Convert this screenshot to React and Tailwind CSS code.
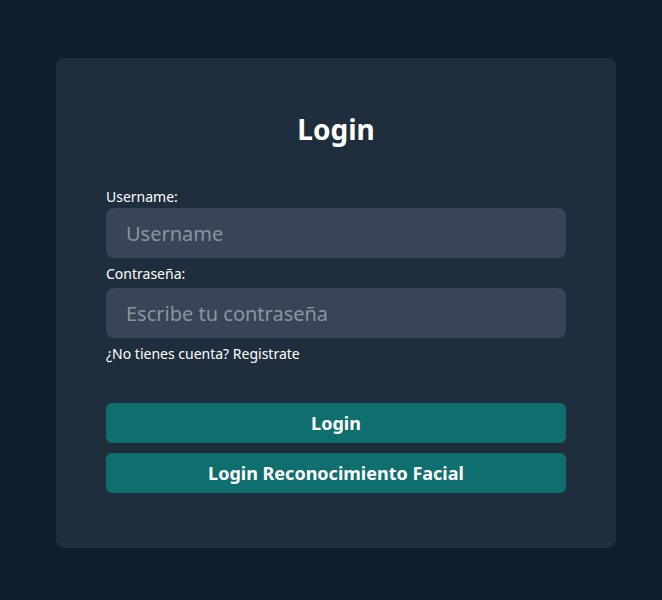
export default function App() {
  return (
    <div className="min-h-screen w-full bg-[#0f1f2d] pt-[58px] font-['Noto_Sans',sans-serif]">
      <div className="ml-[56px] w-[560px] rounded-lg bg-[#1f2e3d] px-[50px] pt-[51px] pb-[55px]">
        <h1 className="text-center text-[28px] font-bold leading-[40px] text-white">Login</h1>
        <form className="mt-[38px] flex flex-col" onSubmit={(e) => e.preventDefault()}>
          <label className="text-[14px] leading-[20px] text-white">Username:</label>
          <input
            type="text"
            placeholder="Username"
            className="mt-[1px] h-[50px] w-full rounded-lg bg-[#374556] px-5 text-[20px] text-white placeholder:text-[#8994a0] outline-none"
          />
          <label className="mt-[6px] text-[14px] leading-[20px] text-white">Contraseña:</label>
          <input
            type="password"
            placeholder="Escribe tu contraseña"
            className="mt-[4px] h-[50px] w-full rounded-lg bg-[#374556] px-5 text-[20px] text-white placeholder:text-[#8994a0] outline-none"
          />
          <p className="mt-[6px] text-[14px] leading-[20px] text-white">¿No tienes cuenta? Registrate</p>
          <button type="submit" className="mt-[39px] h-[40px] w-full rounded-md bg-[#0f6e6e] text-[18px] font-bold text-white">
            Login
          </button>
          <button type="button" className="mt-[10px] h-[40px] w-full rounded-md bg-[#0f6e6e] text-[18px] font-bold text-white">
            Login Reconocimiento Facial
          </button>
        </form>
      </div>
    </div>
  );
}
